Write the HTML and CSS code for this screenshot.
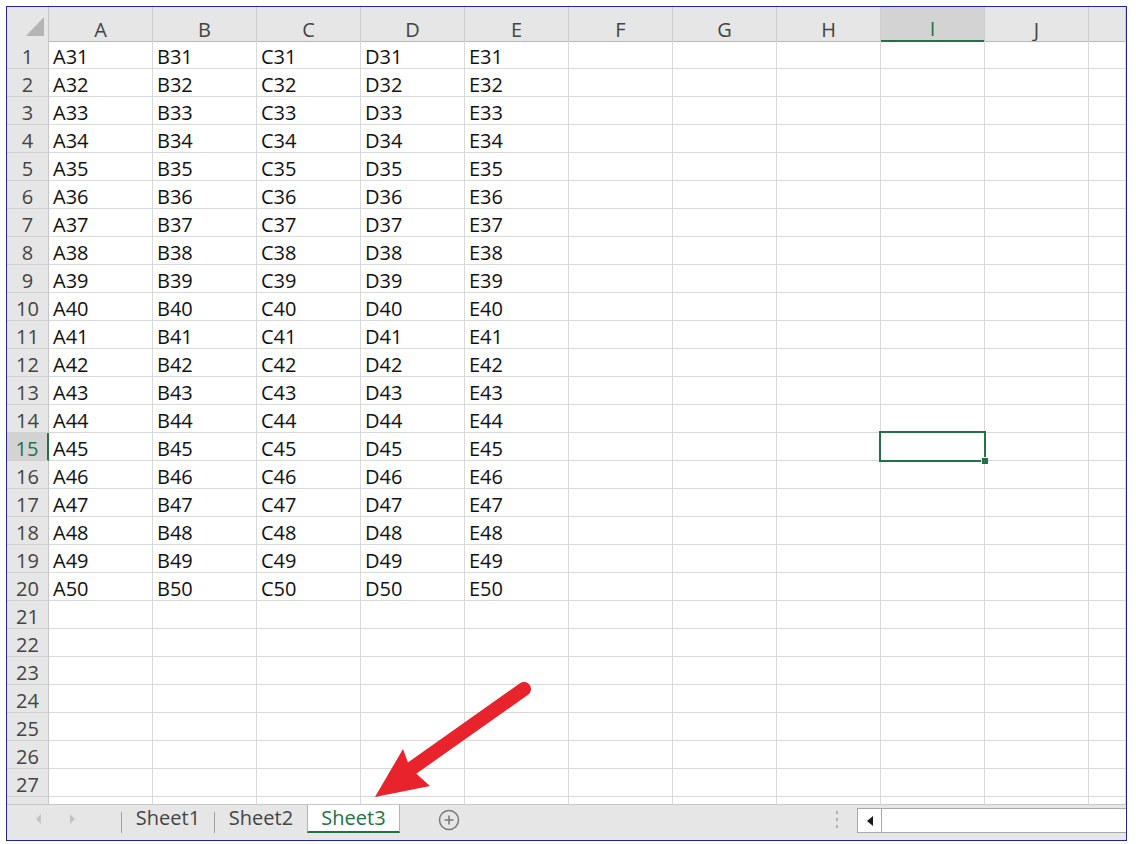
FILE: index.html
```html
<!DOCTYPE html>
<html>
<head>
<meta charset="utf-8">
<link rel="stylesheet" href="styles.css">
</head>
<body>
<div class="window">
  <div class="sheet">
    <div class="row head">
      <div class="corner"><svg width="42" height="34" viewBox="0 0 42 34"><polygon points="37,10 37,29 19,29" fill="#b4b4b4"/></svg></div>
      <div class="ch">A</div><div class="ch">B</div><div class="ch">C</div><div class="ch">D</div><div class="ch">E</div><div class="ch">F</div><div class="ch">G</div><div class="ch">H</div><div class="ch sel">I</div><div class="ch">J</div><div class="ch"></div>
    </div>
    <div class="row"><div class="rh">1</div><div class="c">A31</div><div class="c">B31</div><div class="c">C31</div><div class="c">D31</div><div class="c">E31</div><div class="c"></div><div class="c"></div><div class="c"></div><div class="c"></div><div class="c"></div><div class="c"></div></div>
    <div class="row"><div class="rh">2</div><div class="c">A32</div><div class="c">B32</div><div class="c">C32</div><div class="c">D32</div><div class="c">E32</div><div class="c"></div><div class="c"></div><div class="c"></div><div class="c"></div><div class="c"></div><div class="c"></div></div>
    <div class="row"><div class="rh">3</div><div class="c">A33</div><div class="c">B33</div><div class="c">C33</div><div class="c">D33</div><div class="c">E33</div><div class="c"></div><div class="c"></div><div class="c"></div><div class="c"></div><div class="c"></div><div class="c"></div></div>
    <div class="row"><div class="rh">4</div><div class="c">A34</div><div class="c">B34</div><div class="c">C34</div><div class="c">D34</div><div class="c">E34</div><div class="c"></div><div class="c"></div><div class="c"></div><div class="c"></div><div class="c"></div><div class="c"></div></div>
    <div class="row"><div class="rh">5</div><div class="c">A35</div><div class="c">B35</div><div class="c">C35</div><div class="c">D35</div><div class="c">E35</div><div class="c"></div><div class="c"></div><div class="c"></div><div class="c"></div><div class="c"></div><div class="c"></div></div>
    <div class="row"><div class="rh">6</div><div class="c">A36</div><div class="c">B36</div><div class="c">C36</div><div class="c">D36</div><div class="c">E36</div><div class="c"></div><div class="c"></div><div class="c"></div><div class="c"></div><div class="c"></div><div class="c"></div></div>
    <div class="row"><div class="rh">7</div><div class="c">A37</div><div class="c">B37</div><div class="c">C37</div><div class="c">D37</div><div class="c">E37</div><div class="c"></div><div class="c"></div><div class="c"></div><div class="c"></div><div class="c"></div><div class="c"></div></div>
    <div class="row"><div class="rh">8</div><div class="c">A38</div><div class="c">B38</div><div class="c">C38</div><div class="c">D38</div><div class="c">E38</div><div class="c"></div><div class="c"></div><div class="c"></div><div class="c"></div><div class="c"></div><div class="c"></div></div>
    <div class="row"><div class="rh">9</div><div class="c">A39</div><div class="c">B39</div><div class="c">C39</div><div class="c">D39</div><div class="c">E39</div><div class="c"></div><div class="c"></div><div class="c"></div><div class="c"></div><div class="c"></div><div class="c"></div></div>
    <div class="row"><div class="rh">10</div><div class="c">A40</div><div class="c">B40</div><div class="c">C40</div><div class="c">D40</div><div class="c">E40</div><div class="c"></div><div class="c"></div><div class="c"></div><div class="c"></div><div class="c"></div><div class="c"></div></div>
    <div class="row"><div class="rh">11</div><div class="c">A41</div><div class="c">B41</div><div class="c">C41</div><div class="c">D41</div><div class="c">E41</div><div class="c"></div><div class="c"></div><div class="c"></div><div class="c"></div><div class="c"></div><div class="c"></div></div>
    <div class="row"><div class="rh">12</div><div class="c">A42</div><div class="c">B42</div><div class="c">C42</div><div class="c">D42</div><div class="c">E42</div><div class="c"></div><div class="c"></div><div class="c"></div><div class="c"></div><div class="c"></div><div class="c"></div></div>
    <div class="row"><div class="rh">13</div><div class="c">A43</div><div class="c">B43</div><div class="c">C43</div><div class="c">D43</div><div class="c">E43</div><div class="c"></div><div class="c"></div><div class="c"></div><div class="c"></div><div class="c"></div><div class="c"></div></div>
    <div class="row"><div class="rh">14</div><div class="c">A44</div><div class="c">B44</div><div class="c">C44</div><div class="c">D44</div><div class="c">E44</div><div class="c"></div><div class="c"></div><div class="c"></div><div class="c"></div><div class="c"></div><div class="c"></div></div>
    <div class="row"><div class="rh sel">15</div><div class="c">A45</div><div class="c">B45</div><div class="c">C45</div><div class="c">D45</div><div class="c">E45</div><div class="c"></div><div class="c"></div><div class="c"></div><div class="c"></div><div class="c"></div><div class="c"></div></div>
    <div class="row"><div class="rh">16</div><div class="c">A46</div><div class="c">B46</div><div class="c">C46</div><div class="c">D46</div><div class="c">E46</div><div class="c"></div><div class="c"></div><div class="c"></div><div class="c"></div><div class="c"></div><div class="c"></div></div>
    <div class="row"><div class="rh">17</div><div class="c">A47</div><div class="c">B47</div><div class="c">C47</div><div class="c">D47</div><div class="c">E47</div><div class="c"></div><div class="c"></div><div class="c"></div><div class="c"></div><div class="c"></div><div class="c"></div></div>
    <div class="row"><div class="rh">18</div><div class="c">A48</div><div class="c">B48</div><div class="c">C48</div><div class="c">D48</div><div class="c">E48</div><div class="c"></div><div class="c"></div><div class="c"></div><div class="c"></div><div class="c"></div><div class="c"></div></div>
    <div class="row"><div class="rh">19</div><div class="c">A49</div><div class="c">B49</div><div class="c">C49</div><div class="c">D49</div><div class="c">E49</div><div class="c"></div><div class="c"></div><div class="c"></div><div class="c"></div><div class="c"></div><div class="c"></div></div>
    <div class="row"><div class="rh">20</div><div class="c">A50</div><div class="c">B50</div><div class="c">C50</div><div class="c">D50</div><div class="c">E50</div><div class="c"></div><div class="c"></div><div class="c"></div><div class="c"></div><div class="c"></div><div class="c"></div></div>
    <div class="row"><div class="rh">21</div><div class="c"></div><div class="c"></div><div class="c"></div><div class="c"></div><div class="c"></div><div class="c"></div><div class="c"></div><div class="c"></div><div class="c"></div><div class="c"></div><div class="c"></div></div>
    <div class="row"><div class="rh">22</div><div class="c"></div><div class="c"></div><div class="c"></div><div class="c"></div><div class="c"></div><div class="c"></div><div class="c"></div><div class="c"></div><div class="c"></div><div class="c"></div><div class="c"></div></div>
    <div class="row"><div class="rh">23</div><div class="c"></div><div class="c"></div><div class="c"></div><div class="c"></div><div class="c"></div><div class="c"></div><div class="c"></div><div class="c"></div><div class="c"></div><div class="c"></div><div class="c"></div></div>
    <div class="row"><div class="rh">24</div><div class="c"></div><div class="c"></div><div class="c"></div><div class="c"></div><div class="c"></div><div class="c"></div><div class="c"></div><div class="c"></div><div class="c"></div><div class="c"></div><div class="c"></div></div>
    <div class="row"><div class="rh">25</div><div class="c"></div><div class="c"></div><div class="c"></div><div class="c"></div><div class="c"></div><div class="c"></div><div class="c"></div><div class="c"></div><div class="c"></div><div class="c"></div><div class="c"></div></div>
    <div class="row"><div class="rh">26</div><div class="c"></div><div class="c"></div><div class="c"></div><div class="c"></div><div class="c"></div><div class="c"></div><div class="c"></div><div class="c"></div><div class="c"></div><div class="c"></div><div class="c"></div></div>
    <div class="row"><div class="rh">27</div><div class="c"></div><div class="c"></div><div class="c"></div><div class="c"></div><div class="c"></div><div class="c"></div><div class="c"></div><div class="c"></div><div class="c"></div><div class="c"></div><div class="c"></div></div>
    <div class="row"><div class="rh"></div><div class="c"></div><div class="c"></div><div class="c"></div><div class="c"></div><div class="c"></div><div class="c"></div><div class="c"></div><div class="c"></div><div class="c"></div><div class="c"></div><div class="c"></div></div>
    <div class="selection"><div class="handle"></div></div>
  </div>
  <div class="tabbar">
    <div class="nav">
      <span class="tri-l"></span>
      <span class="tri-r"></span>
    </div>
    <div class="sep"></div>
    <div class="tab">Sheet1</div>
    <div class="sep"></div>
    <div class="tab">Sheet2</div>
    <div class="tab active">Sheet3</div>
    <div class="add"><svg width="22" height="22" viewBox="0 0 22 22"><circle cx="11" cy="11" r="9.5" fill="none" stroke="#7a7a7a" stroke-width="1.5"/><path d="M11 6.5v9M6.5 11h9" stroke="#7a7a7a" stroke-width="1.6"/></svg></div>
    <div class="dots"><i></i><i></i><i></i></div>
    <div class="hscroll">
      <div class="sbtn"><span class="tri-b"></span></div>
      <div class="track"></div>
    </div>
  </div>
</div>
<svg class="arrow" width="1136" height="844" viewBox="0 0 1136 844">
  <line x1="524" y1="689" x2="408" y2="771" stroke="#e8232b" stroke-width="14" stroke-linecap="round"/>
  <polygon points="375,797 403,749 410,768 430,786" fill="#e8232b"/>
</svg>
</body>
</html>
```
FILE: styles.css
```css
* { box-sizing: border-box; }
body {
  margin: 0;
  background: #fff;
  font-family: "Open Sans", "Noto Sans", "Liberation Sans", sans-serif;
}
.window {
  margin: 6px 0 0 6px;
  width: 1121px;
  height: 835px;
  border: 1px solid #2323a0;
  display: flex;
  flex-direction: column;
  overflow: hidden;
}
.sheet {
  position: relative;
  height: 797px;
  flex: none;
  overflow: hidden;
}
.row {
  display: grid;
  grid-template-columns: 42px repeat(10, 104px) 1fr;
  height: 28px;
}
.row.head { height: 34px; }
.c, .rh, .ch {
  display: flex;
  align-items: flex-end;
  font-size: 20px;
  line-height: 20px;
  padding-bottom: 1px;
  white-space: nowrap;
  overflow: hidden;
}
.c {
  padding-left: 4px;
  color: #111;
  border-right: 1px solid #d9d9d9;
  border-bottom: 1px solid #d9d9d9;
}
.rh {
  justify-content: center;
  background: #e6e6e6;
  color: #444;
  border-right: 1px solid #c6c6c6;
  border-bottom: 1px solid #d0d0d0;
}
.rh.sel {
  background: #d3d3d3;
  color: #217346;
  border-right: 2px solid #217346;
}
.corner {
  background: #e6e6e6;
  border-right: 1px solid #c6c6c6;
  border-bottom: 1px solid #b8b8b8;
}
.corner svg { display: block; }
.ch {
  justify-content: center;
  background: #e6e6e6;
  color: #444;
  border-right: 1px solid #cdcdcd;
  border-bottom: 1px solid #b8b8b8;
}
.ch.sel {
  background: #d3d3d3;
  color: #217346;
  border-bottom: 2px solid #217346;
}
.selection {
  position: absolute;
  left: 872px;
  top: 424px;
  width: 107px;
  height: 31px;
  border: 2px solid #217346;
}
.handle {
  position: absolute;
  right: -4px;
  bottom: -4px;
  width: 7px;
  height: 7px;
  background: #217346;
  border-top: 1px solid #fff;
  border-left: 1px solid #fff;
}
.tabbar {
  flex: none;
  height: 36px;
  background: #e6e6e6;
  border-top: 1px solid #c6c6c6;
  display: flex;
  align-items: flex-start;
  font-size: 20px;
  color: #444;
}
.nav {
  width: 114px;
  height: 28px;
  display: flex;
  align-items: center;
  padding-left: 29px;
  gap: 29px;
}
.tri-l, .tri-r {
  width: 0;
  height: 0;
  border-top: 5px solid transparent;
  border-bottom: 5px solid transparent;
}
.tri-l { border-right: 5px solid #c4c4c4; }
.tri-r { border-left: 5px solid #c4c4c4; }
.sep {
  width: 1px;
  height: 21px;
  margin-top: 7px;
  background: #a0a0a0;
}
.tab {
  width: 92px;
  height: 28px;
  line-height: 26px;
  text-align: center;
  white-space: nowrap;
}
.tab.active {
  width: 93px;
  background: #fff;
  color: #217346;
  border-left: 1px solid #b4b4b4;
  border-right: 1px solid #b4b4b4;
  border-bottom: 2px solid #217346;
}
.add {
  margin-left: 38px;
  margin-top: 4px;
  height: 22px;
}
.add svg { display: block; }
.dots {
  margin-left: auto;
  margin-right: 19px;
  margin-top: 6px;
  display: flex;
  flex-direction: column;
  gap: 4px;
}
.dots i {
  display: block;
  width: 2px;
  height: 3px;
  background: #b0b0b0;
}
.hscroll {
  width: 269px;
  height: 25px;
  margin-top: 3px;
  display: flex;
  background: #fff;
  border: 1px solid #a8a8a8;
  border-right: none;
}
.sbtn {
  width: 24px;
  border-right: 1px solid #a8a8a8;
  display: flex;
  align-items: center;
  justify-content: center;
}
.tri-b {
  width: 0;
  height: 0;
  border-top: 5px solid transparent;
  border-bottom: 5px solid transparent;
  border-right: 6px solid #1a1a1a;
}
.track { flex: 1; }
.arrow {
  position: absolute;
  left: 0;
  top: 0;
  pointer-events: none;
}
```
